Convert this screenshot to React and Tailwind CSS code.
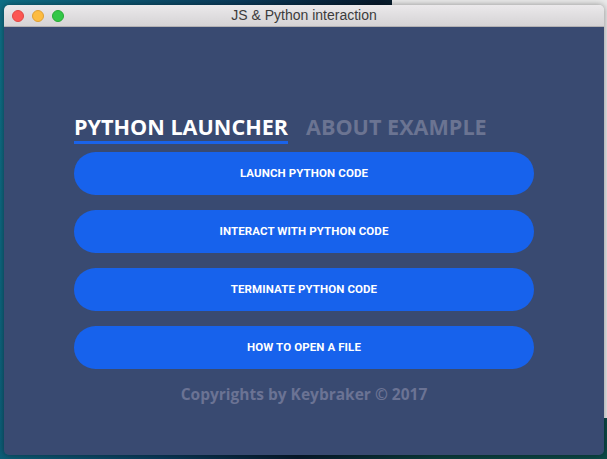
import React, { useState } from 'react';

const actions = [
  'LAUNCH PYTHON CODE',
  'INTERACT WITH PYTHON CODE',
  'TERMINATE PYTHON CODE',
  'HOW TO OPEN A FILE',
];

export default function App() {
  const [tab, setTab] = useState('launcher');

  return (
    <div className="relative w-[607px] h-[459px] overflow-hidden bg-[linear-gradient(100deg,#0f6f86_0%,#0a3a5a_35%,#071a2c_55%,#0b3d3c_75%,#0d4a48_100%)]">
      {/* other app peeking behind, top right */}
      <div className="absolute right-0 top-0 w-[215px] h-[418px] bg-[#e9e9e9]" />

      {/* Window */}
      <div className="relative ml-[4px] mt-[5px] w-[600px] h-[450px] rounded-[5px] overflow-hidden flex flex-col shadow-[0_0_6px_rgba(0,0,0,0.4)]">
        {/* Title bar */}
        <div className="relative h-[22px] flex items-center px-[8px] bg-[linear-gradient(#ebe9eb,#d5d3d5)] border-b border-[#b3b1b3]">
          <div className="flex gap-[8px]">
            <span className="w-[12px] h-[12px] rounded-full bg-[#fc5753] border border-[#df4744]" />
            <span className="w-[12px] h-[12px] rounded-full bg-[#fdbc40] border border-[#de9f34]" />
            <span className="w-[12px] h-[12px] rounded-full bg-[#33c748] border border-[#27aa35]" />
          </div>
          <div className="absolute inset-0 flex items-center justify-center text-[14px] text-[#3c3c3c] font-['Helvetica','Liberation_Sans',sans-serif]">
            JS &amp; Python interaction
          </div>
        </div>

        {/* Body */}
        <div className="flex-1 bg-[#394a71] px-[70px] pt-[89px]">
          <div className="flex items-end gap-[18px] font-['Open_Sans',sans-serif] font-bold text-[21.6px] leading-none">
            <button
              onClick={() => setTab('launcher')}
              className={`pb-[3px] border-b-[3px] ${tab === 'launcher' ? 'text-white border-[#1a63ea]' : 'text-[#6b7492] border-transparent'}`}
            >
              PYTHON LAUNCHER
            </button>
            <button
              onClick={() => setTab('about')}
              className={`pb-[3px] border-b-[3px] ${tab === 'about' ? 'text-white border-[#1a63ea]' : 'text-[#6b7492] border-transparent'}`}
            >
              ABOUT EXAMPLE
            </button>
          </div>

          <div className="mt-[8px] flex flex-col gap-[15px]">
            {actions.map((label) => (
              <button
                key={label}
                className="h-[43px] w-[460px] pt-[2px] rounded-full bg-[#1762ec] text-white font-['Roboto',sans-serif] font-bold text-[11.5px] tracking-[0.1px]"
              >
                {label}
              </button>
            ))}
          </div>

          <p className="mt-[14px] w-[460px] text-center font-['Open_Sans',sans-serif] font-bold text-[15.5px] text-[#6b7394]">
            Copyrights by Keybraker © 2017
          </p>
        </div>
      </div>
    </div>
  );
}
